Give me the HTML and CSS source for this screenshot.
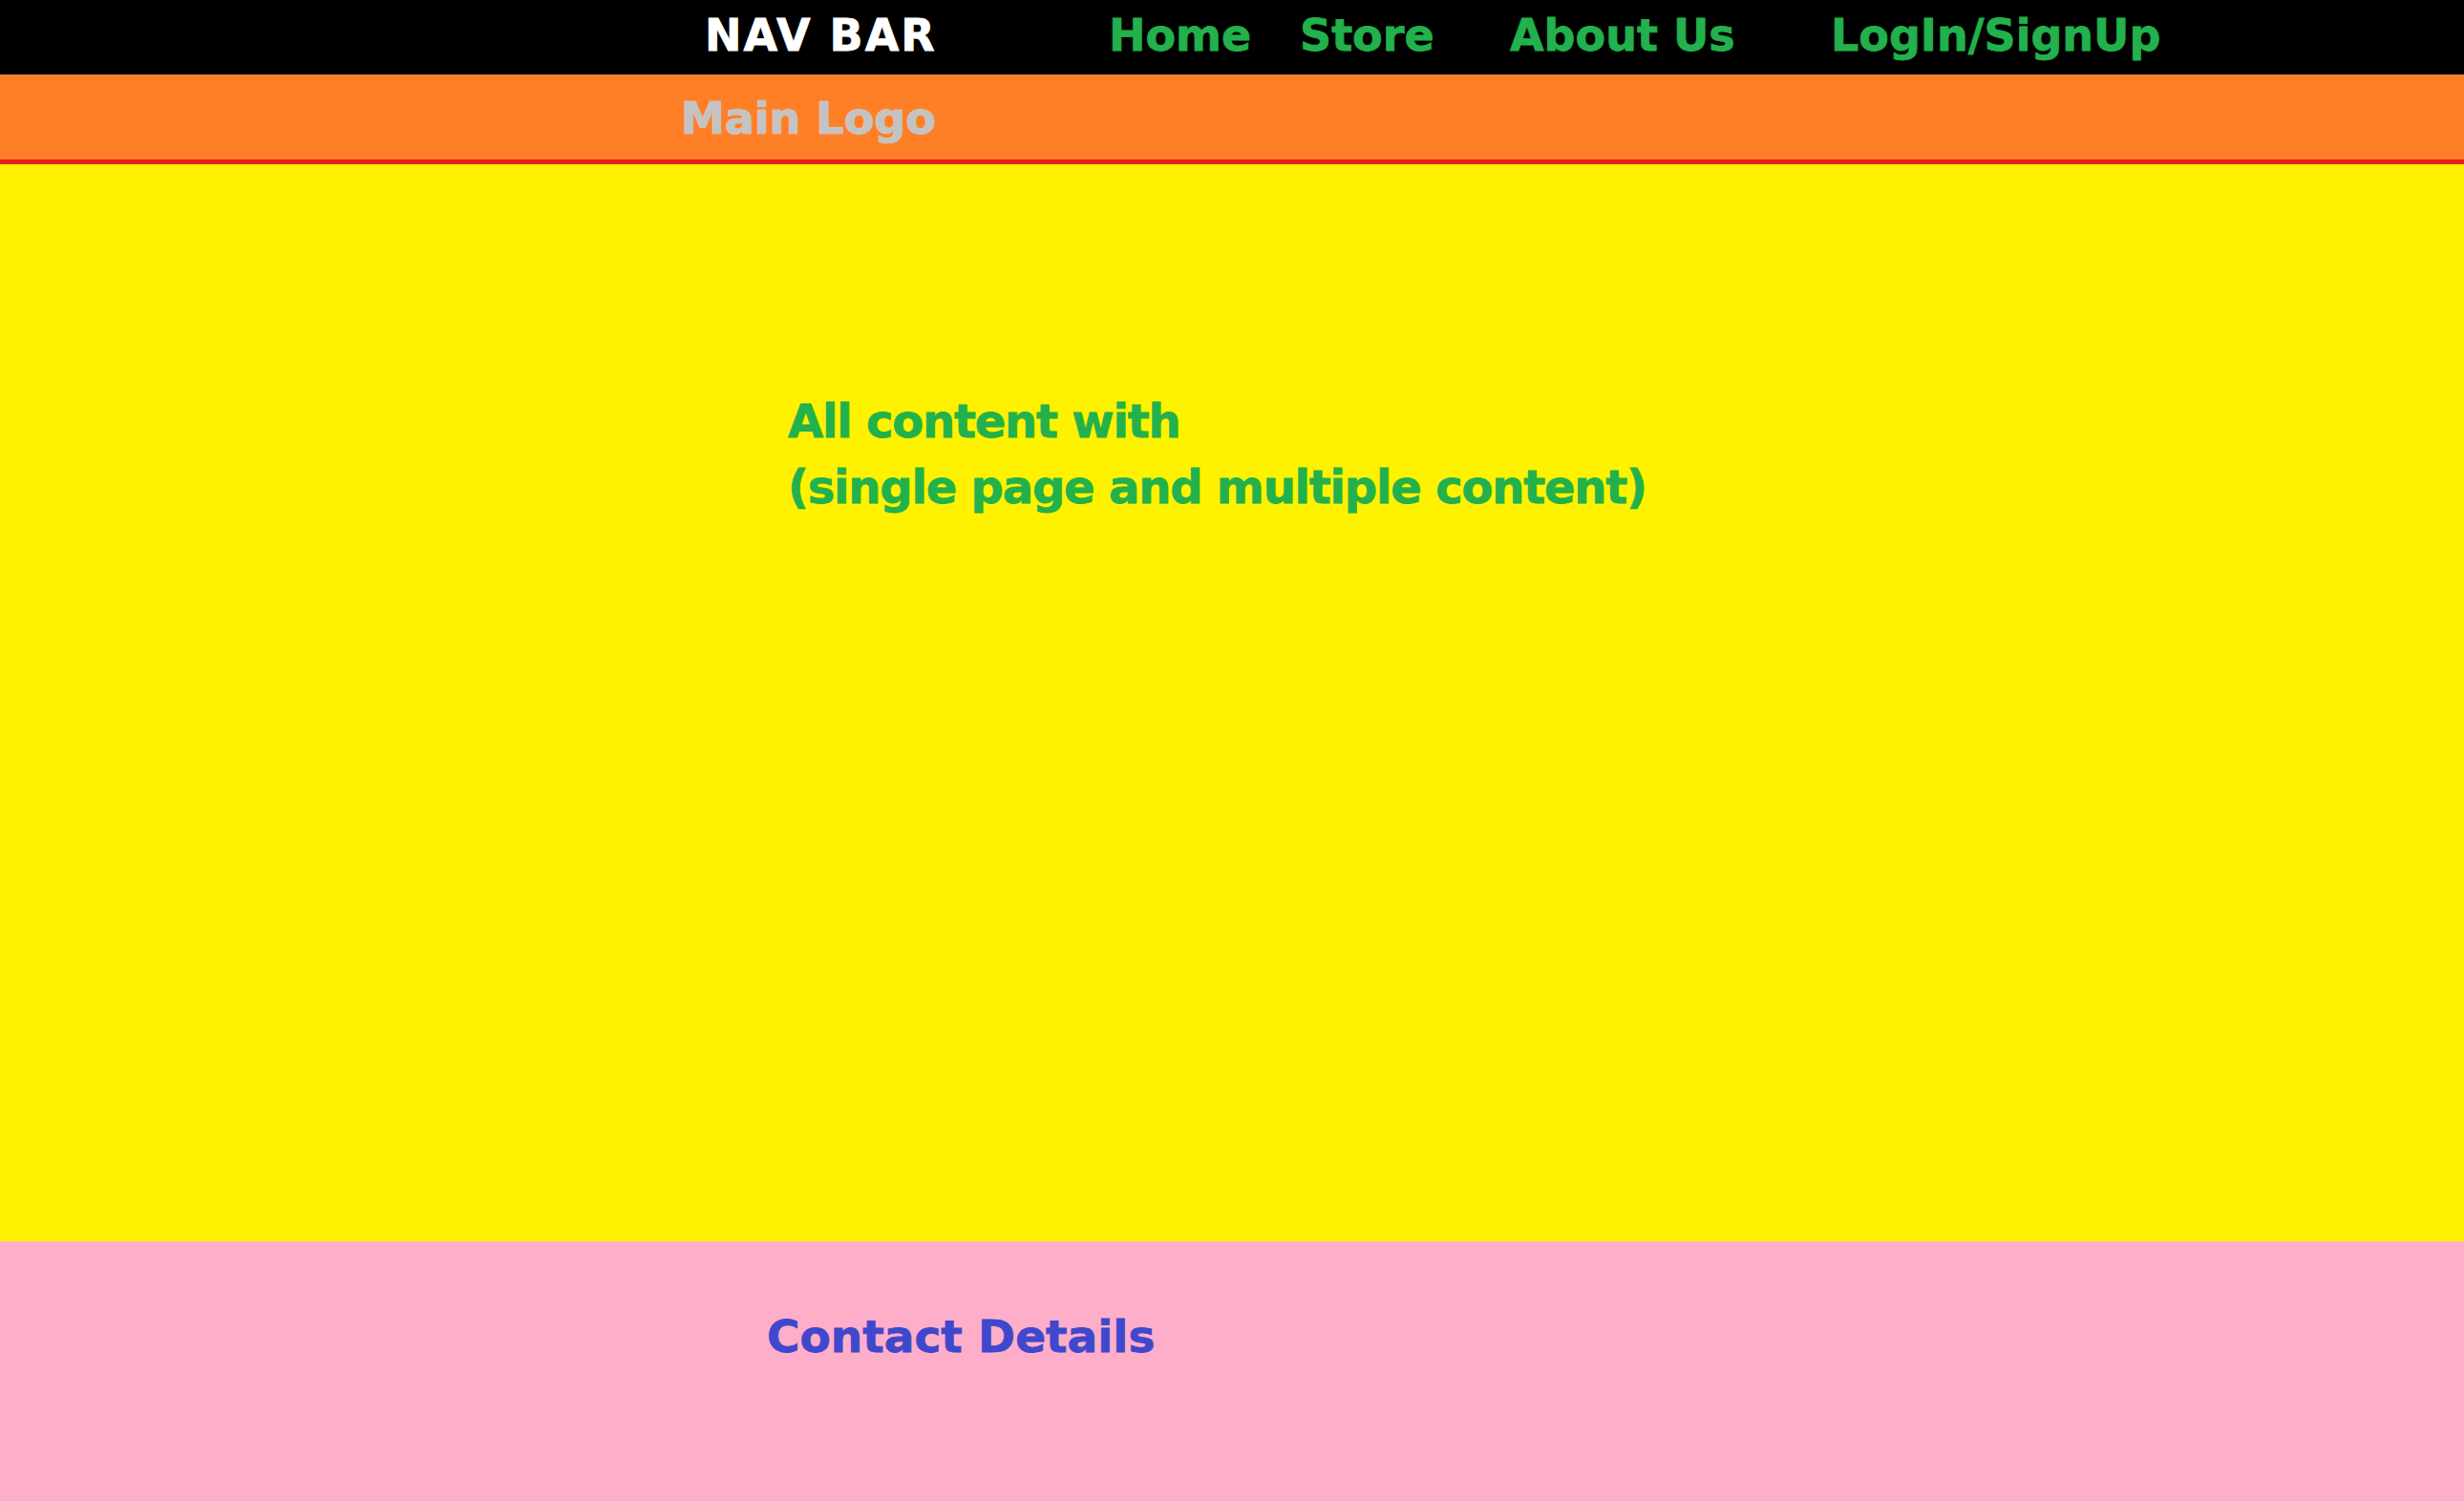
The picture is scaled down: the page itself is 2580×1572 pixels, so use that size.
FILE: index.html
```html
<!DOCTYPE html>
<html lang="en">
<head>
<meta charset="utf-8">
<title>Wireframe</title>
<link rel="stylesheet" href="styles.css">
</head>
<body>
  <header class="navbar">
    <span class="nav-title">NAV BAR</span>
    <nav class="nav-links">
      <a class="nav-link nav-home">Home</a>
      <a class="nav-link nav-store">Store</a>
      <a class="nav-link nav-about">About Us</a>
      <a class="nav-link nav-login">LogIn/SignUp</a>
    </nav>
  </header>
  <div class="logo-band">
    <span class="main-logo">Main Logo</span>
  </div>
  <main class="content">
    <p class="content-text">All content with<br>(single page and multiple content)</p>
  </main>
  <footer class="footer">
    <span class="contact">Contact Details</span>
  </footer>
</body>
</html>
```
FILE: styles.css
```css
html, body {
  margin: 0;
  padding: 0;
}
body {
  width: 2580px;
  height: 1572px;
  display: flex;
  flex-direction: column;
  font-family: "DejaVu Sans", "Liberation Sans", sans-serif;
  font-weight: bold;
  overflow: hidden;
}
.navbar {
  height: 78px;
  box-sizing: border-box;
  background: #000000;
  display: flex;
  align-items: flex-start;
  padding: 14px 0 0 738px;
  font-size: 46px;
  line-height: 46px;
}
.nav-title {
  color: #ffffff;
  width: 423px;
  letter-spacing: 2px;
  -webkit-text-stroke: 0.8px #ffffff;
}
.nav-links {
  display: flex;
}
.nav-link {
  color: #22b14c;
  text-decoration: none;
  -webkit-text-stroke: 0.8px #22b14c;
}
.nav-home { width: 200px; }
.nav-store { width: 220px; }
.nav-about { width: 336px; }
.logo-band {
  height: 94px;
  box-sizing: border-box;
  background: #ff7f27;
  border-bottom: 5px solid #ed1c24;
  padding: 23px 0 0 713px;
}
.main-logo {
  display: block;
  font-size: 46px;
  line-height: 46px;
  color: #c3c3c3;
  -webkit-text-stroke: 0.6px #c3c3c3;
  text-shadow: 0 0 1px #ffffff;
}
.content {
  height: 1128px;
  box-sizing: border-box;
  background: #fff200;
  padding: 235px 0 0 825px;
}
.content-text {
  margin: 0;
  color: #22b14c;
  font-size: 48px;
  line-height: 69px;
  letter-spacing: -1.2px;
  -webkit-text-stroke: 0.8px #22b14c;
}
.footer {
  flex: 1;
  background: #ffaec9;
  padding: 76px 0 0 803px;
}
.contact {
  display: block;
  color: #3f48cc;
  font-size: 47px;
  line-height: 47px;
  -webkit-text-stroke: 0.8px #3f48cc;
}
```
